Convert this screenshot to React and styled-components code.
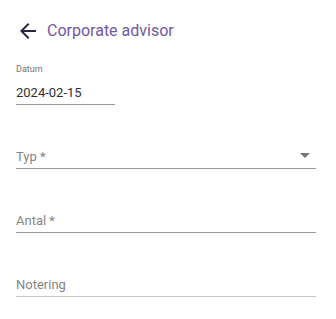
import React from "react";
import styled, { createGlobalStyle } from "styled-components";

const Global = createGlobalStyle`
  html, body { margin: 0; padding: 0; background: #fff; }
  body { font-family: Roboto, "Noto Sans", Arial, sans-serif; }
`;

const Page = styled.div`
  width: 336px;
  height: 319px;
  box-sizing: border-box;
  padding: 19px 20px 0 16px;
  display: flex;
  flex-direction: column;
`;

const Header = styled.div`
  display: flex;
  align-items: center;
  gap: 7px;
  height: 24px;
`;

const BackButton = styled.button`
  border: 0;
  background: none;
  padding: 0;
  width: 24px;
  height: 24px;
  display: flex;
  align-items: center;
  justify-content: center;
  color: #2b2340;
  cursor: pointer;
`;

const Title = styled.h1`
  margin: 0;
  font-size: 16px;
  font-weight: 400;
  line-height: 24px;
  color: #6f57a4;
`;

const Form = styled.div`
  display: flex;
  flex-direction: column;
  margin-top: 21px;
`;

const Field = styled.div`
  position: relative;
  width: ${(p) => (p.$narrow ? "99px" : "300px")};
  height: ${(p) => (p.$first ? "40px" : "39px")};
  margin-top: ${(p) => (p.$first ? "0" : "24px")};
  border-bottom: 1px solid ${(p) => p.$line || "#9a9a9a"};
  display: flex;
  flex-direction: column;
  justify-content: flex-end;
`;

const SmallLabel = styled.div`
  font-size: 9px;
  color: #737373;
  line-height: 11px;
  margin-bottom: 10px;
`;

const Value = styled.div`
  font-size: 13px;
  color: #303030;
  line-height: 16px;
  padding-bottom: 3px;
`;

const Placeholder = styled.div`
  font-size: 13px;
  color: #858585;
  line-height: 16px;
  padding-bottom: 3px;
`;

const Caret = styled.span`
  position: absolute;
  right: 6px;
  bottom: 10px;
  width: 0;
  height: 0;
  border-left: 5px solid transparent;
  border-right: 5px solid transparent;
  border-top: 5px solid #757575;
`;

export default function App() {
  return (
    <>
      <Global />
      <Page>
        <Header>
          <BackButton aria-label="Tillbaka">
            <svg width="24" height="24" viewBox="0 0 24 24">
              <path d="M20 11H7.83l5.59-5.59L12 4l-8 8 8 8 1.41-1.41L7.83 13H20v-2z" fill="currentColor" />
            </svg>
          </BackButton>
          <Title>Corporate advisor</Title>
        </Header>
        <Form>
          <Field $narrow $first>
            <SmallLabel>Datum</SmallLabel>
            <Value>2024-02-15</Value>
          </Field>
          <Field>
            <Placeholder>Typ *</Placeholder>
            <Caret />
          </Field>
          <Field>
            <Placeholder>Antal *</Placeholder>
          </Field>
          <Field $line="#c4c4c4">
            <Placeholder>Notering</Placeholder>
          </Field>
        </Form>
      </Page>
    </>
  );
}
